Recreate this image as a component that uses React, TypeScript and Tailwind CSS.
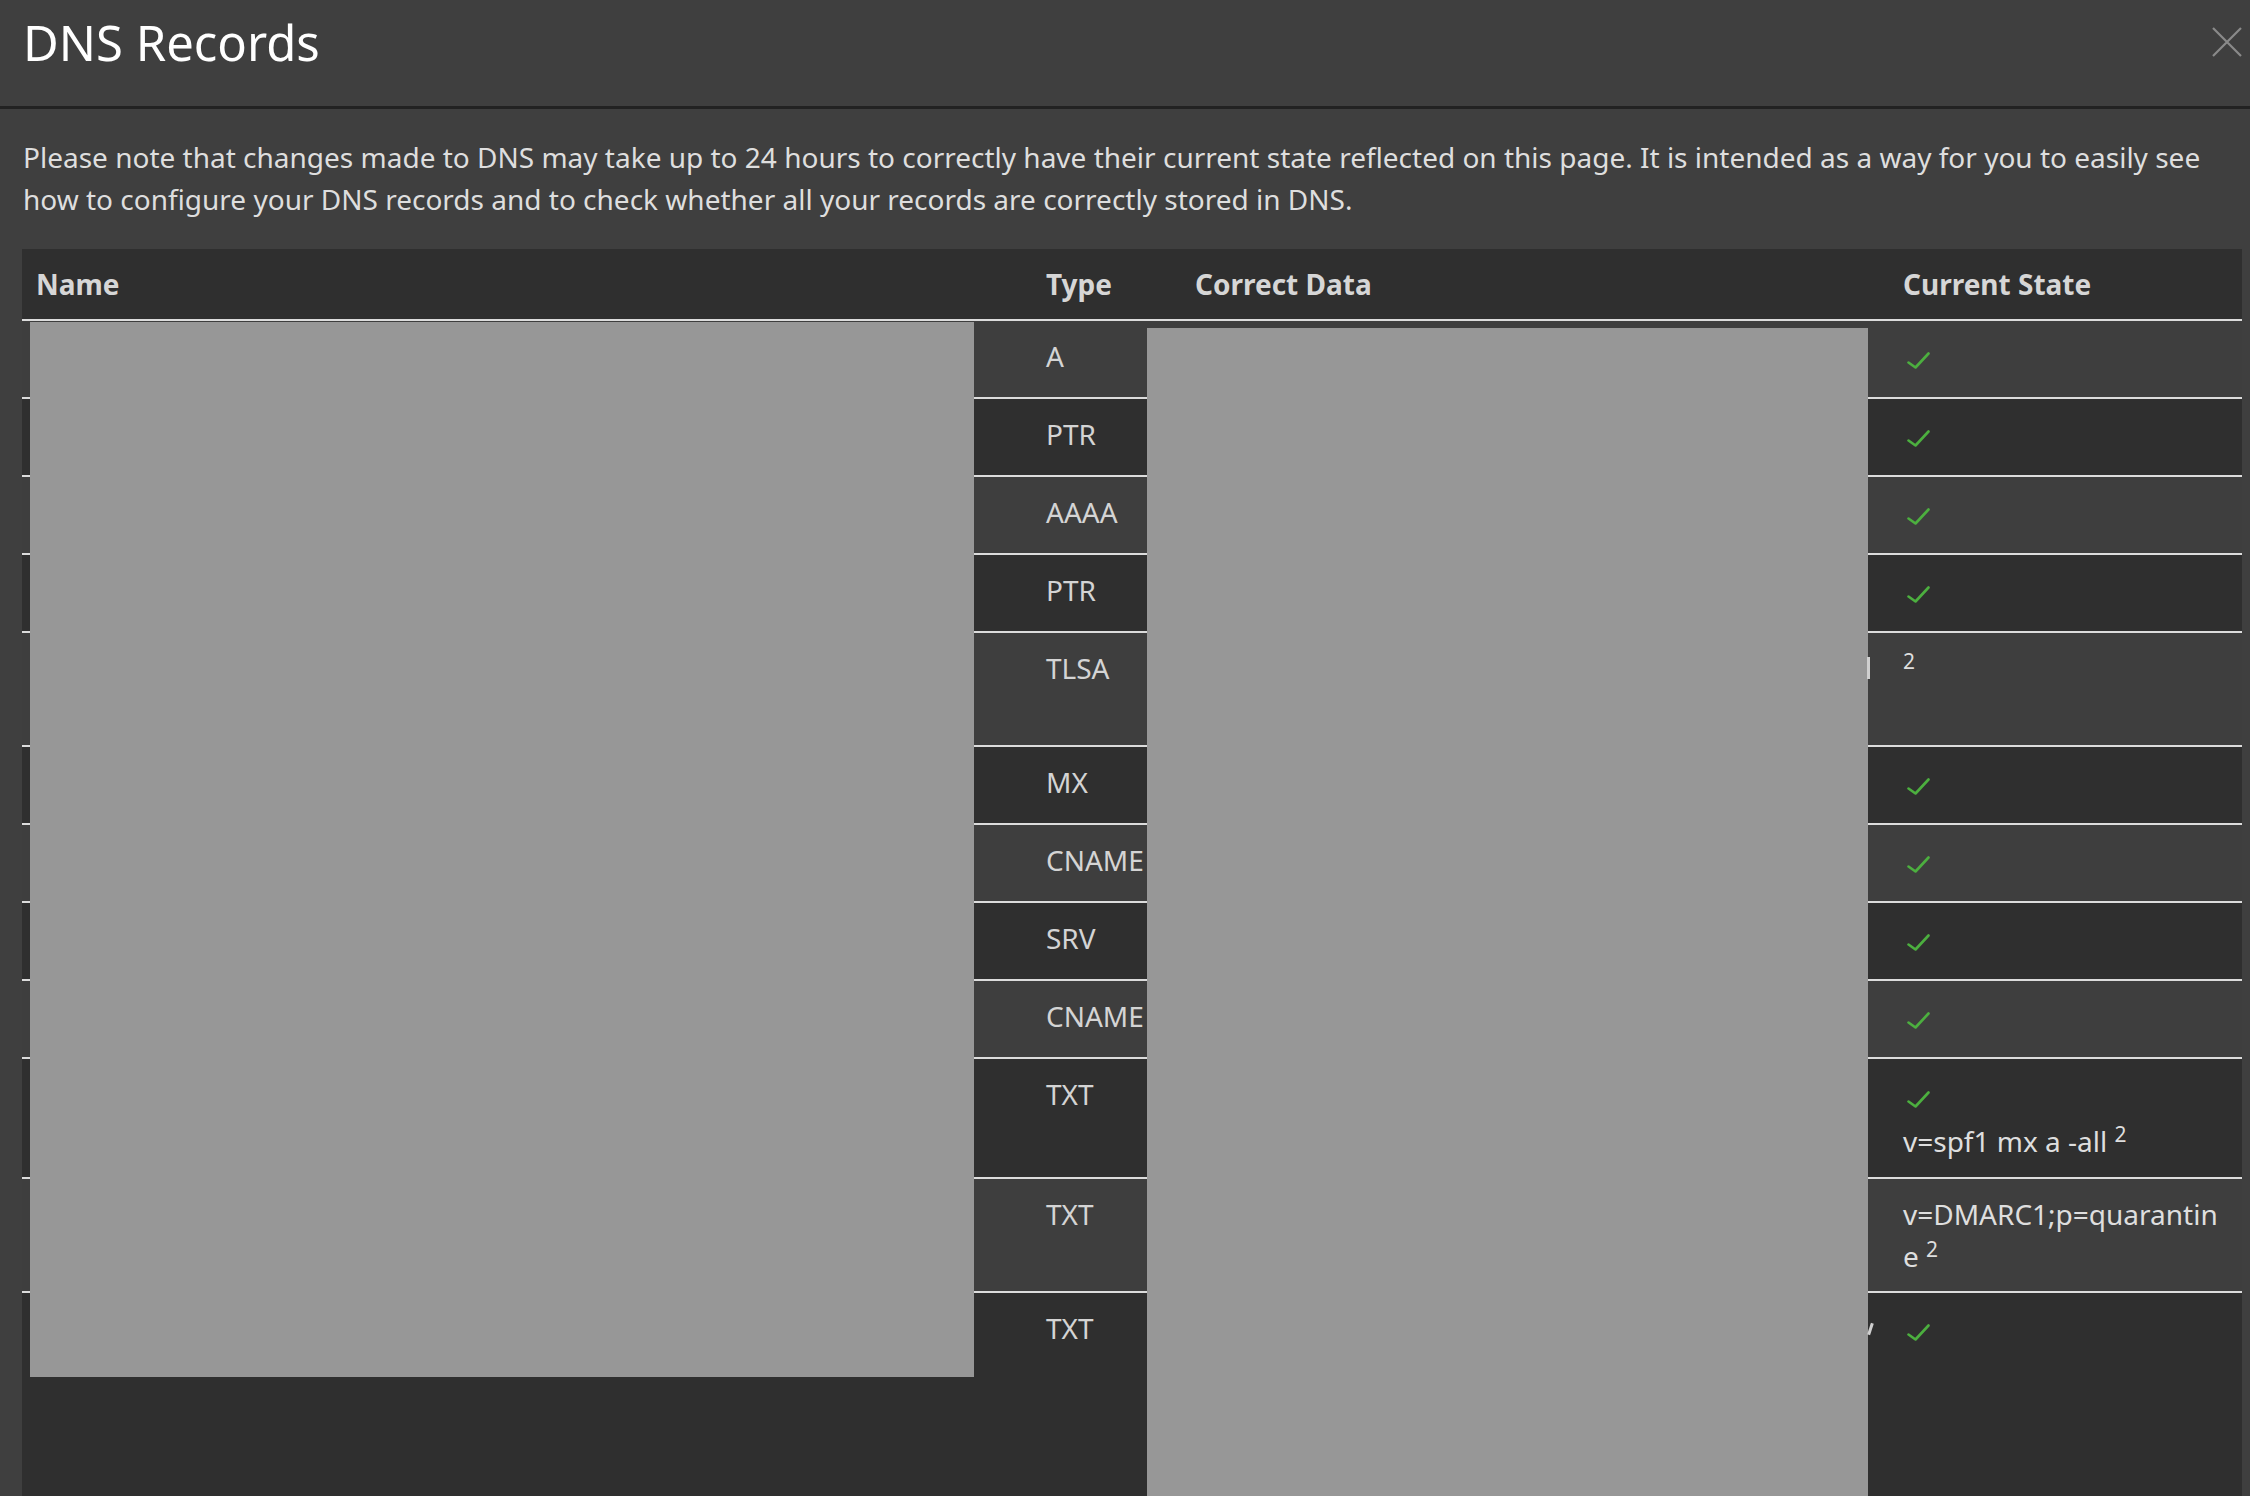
import React from 'react';

type StateKind = 'check' | 'sup' | 'spf' | 'dmarc';

interface DnsRow {
  type: string;
  height: string;
  state: StateKind;
}

const rows: DnsRow[] = [
  { type: 'A', height: 'h-[76px]', state: 'check' },
  { type: 'PTR', height: 'h-[76px]', state: 'check' },
  { type: 'AAAA', height: 'h-[76px]', state: 'check' },
  { type: 'PTR', height: 'h-[76px]', state: 'check' },
  { type: 'TLSA', height: 'h-[112px]', state: 'sup' },
  { type: 'MX', height: 'h-[76px]', state: 'check' },
  { type: 'CNAME', height: 'h-[76px]', state: 'check' },
  { type: 'SRV', height: 'h-[76px]', state: 'check' },
  { type: 'CNAME', height: 'h-[76px]', state: 'check' },
  { type: 'TXT', height: 'h-[118px]', state: 'spf' },
  { type: 'TXT', height: 'h-[112px]', state: 'dmarc' },
  { type: 'TXT', height: 'h-[240px]', state: 'check' },
];

const grid = 'grid grid-cols-[1010px_149px_708px_353px]';

function CheckMark() {
  return (
    <svg width="23" height="17" viewBox="0 0 23 17" className="ml-[4px] block">
      <polyline
        points="1.5,10.5 8.5,15.5 21.5,1.5"
        fill="none"
        stroke="#4caf3f"
        strokeWidth="2.6"
        strokeLinecap="round"
        strokeLinejoin="round"
      />
    </svg>
  );
}

function StateCell({ state }: { state: StateKind }) {
  switch (state) {
    case 'check':
      return (
        <div className="pt-[17px]">
          <CheckMark />
        </div>
      );
    case 'sup':
      return <div><sup className="text-[21px]">2</sup></div>;
    case 'spf':
      return (
        <div className="pt-[18px]">
          <CheckMark />
          <div className="mt-[12px]">
            v=spf1 mx a -all <sup className="text-[21px]">2</sup>
          </div>
        </div>
      );
    case 'dmarc':
      return (
        <div>
          v=DMARC1;p=quarantin
          <br />
          e <sup className="text-[21px]">2</sup>
        </div>
      );
  }
}

export default function App() {
  return (
    <div className="h-[1496px] w-[2250px] overflow-hidden bg-[#3f3f3f] font-['Noto_Sans',sans-serif] text-[#dedede]">
      {/* Modal header */}
      <div className="flex h-[109px] items-start justify-between border-b-[3px] border-[#222222]">
        <h1 className="pl-[23px] pt-[11px] text-[49px] leading-[62px] font-normal text-white">DNS Records</h1>
        <svg width="30" height="30" viewBox="0 0 30 30" className="mr-[8px] mt-[27px]">
          <path d="M1 1 L29 29 M29 1 L1 29" stroke="#8a8a8a" strokeWidth="2.2" />
        </svg>
      </div>

      <div className="pl-[22px] pr-[8px] pt-[27px]">
        <p className="pl-[1px] text-[28px] leading-[42px]">
          Please note that changes made to DNS may take up to 24 hours to correctly have their current state
          reflected on this page. It is intended as a way for you to easily see how to configure your DNS records
          and to check whether all your records are correctly stored in DNS.
        </p>

        <div className="mt-[29px] text-[28px] leading-[42px]">
          {/* Table header */}
          <div className={`${grid} h-[72px] border-b-2 border-[#dcdcdc] bg-[#2f2f2f] font-bold text-[#d6d6d6]`}>
            <div className="px-[14px] pt-[14px]">Name</div>
            <div className="px-[14px] pt-[14px]">Type</div>
            <div className="px-[14px] pt-[14px]">Correct Data</div>
            <div className="px-[14px] pt-[14px]">Current State</div>
          </div>

          {/* Table body */}
          <div className="relative">
            {rows.map((row, i) => (
              <div
                key={i}
                className={`${grid} ${row.height} box-content ${i > 0 ? 'border-t-2 border-[#dcdcdc]' : ''} ${
                  i % 2 === 0 ? 'bg-[#3e3e3e]' : 'bg-[#2f2f2f]'
                }`}
              >
                <div className="px-[14px] pt-[14px]" />
                <div className="whitespace-nowrap px-[14px] pt-[14px] text-[#d4d4d4]">{row.type}</div>
                <div className="px-[14px] pt-[14px]" />
                <div className="px-[14px] pt-[14px]">
                  <StateCell state={row.state} />
                </div>
              </div>
            ))}

            {/* redacted areas */}
            <div className="absolute left-[8px] top-[1px] h-[1055px] w-[944px] bg-[#979797]" />
            <div className="absolute left-[1125px] top-[7px] h-[1300px] w-[721px] bg-[#979797]" />
            <div className="absolute left-[1845px] top-[336px] h-[22px] w-[3px] bg-[#cfcfcf]" />
            <div className="absolute left-[1847px] top-[1002px] h-[12px] w-[3px] rotate-[18deg] bg-[#cfcfcf]" />
          </div>
        </div>
      </div>
    </div>
  );
}
